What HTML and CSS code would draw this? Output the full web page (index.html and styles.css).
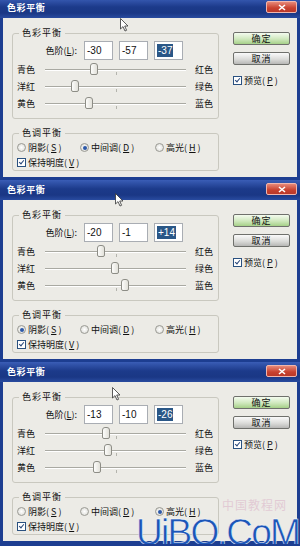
FILE: index.html
```html
<!DOCTYPE html>
<html lang="zh-CN">
<head>
    <meta charset="UTF-8">
    <meta name="viewport" content="width=device-width, initial-scale=1.0">
    <title>色彩平衡</title>
    <link rel="stylesheet" href="styles.css">
</head>
<body>
<div class="stack">

    <!-- dialog 1: midtones -->
    <div class="dlg">
        <div class="titlebar">
            <span class="title">色彩平衡</span>
            <span class="close"><svg width="8" height="7" viewBox="0 0 8 7"><path d="M1 1 L7 6 M7 1 L1 6" stroke="#fff" stroke-width="1.6"/></svg></span>
        </div>
        <div class="body">
            <div class="main">
                <fieldset class="grp grp-color">
                    <legend>色彩平衡</legend>
                    <div class="levels">
                        <span class="lbl">色阶(<u>L</u>):</span>
                        <span class="field">-30</span>
                        <span class="field">-57</span>
                        <span class="field"><span class="hl">-37</span></span>
                    </div>
                    <div class="row"><span>青色</span><div class="track"><span class="thumb" style="left: 35%"></span></div><span class="rlbl">红色</span></div>
                    <div class="row"><span>洋红</span><div class="track"><span class="thumb" style="left: 21.5%"></span></div><span class="rlbl">绿色</span></div>
                    <div class="row"><span>黄色</span><div class="track"><span class="thumb" style="left: 31.5%"></span></div><span class="rlbl">蓝色</span></div>
                </fieldset>
                <fieldset class="grp grp-tone">
                    <legend>色调平衡</legend>
                    <div class="radios">
                        <span class="opt"><i class="radio"></i>阴影(<u>S</u>)</span>
                        <span class="opt"><i class="radio on"></i>中间调(<u>D</u>)</span>
                        <span class="opt"><i class="radio"></i>高光(<u>H</u>)</span>
                    </div>
                    <div class="opt"><i class="check"></i>保持明度(<u>V</u>)</div>
                </fieldset>
            </div>
            <div class="side">
                <div class="btn ok">确定</div>
                <div class="btn cancel">取消</div>
                <div class="opt preview"><i class="check"></i>预览(<u>P</u>)</div>
            </div>
        </div>
        <svg class="cursor c1" width="9" height="14" viewBox="0 0 9 14"><path d="M0.5 0.5 V11 L3 8.6 L5 13 L6.6 12.3 L4.7 8 H8 Z" fill="#fff" stroke="#333" stroke-width="0.8"/></svg>
    </div>

    <!-- dialog 2: shadows -->
    <div class="dlg">
        <div class="titlebar">
            <span class="title">色彩平衡</span>
            <span class="close"><svg width="8" height="7" viewBox="0 0 8 7"><path d="M1 1 L7 6 M7 1 L1 6" stroke="#fff" stroke-width="1.6"/></svg></span>
        </div>
        <div class="body">
            <div class="main">
                <fieldset class="grp grp-color">
                    <legend>色彩平衡</legend>
                    <div class="levels">
                        <span class="lbl">色阶(<u>L</u>):</span>
                        <span class="field">-20</span>
                        <span class="field">-1</span>
                        <span class="field"><span class="hl">+14</span></span>
                    </div>
                    <div class="row"><span>青色</span><div class="track"><span class="thumb" style="left: 40%"></span></div><span class="rlbl">红色</span></div>
                    <div class="row"><span>洋红</span><div class="track"><span class="thumb" style="left: 49.5%"></span></div><span class="rlbl">绿色</span></div>
                    <div class="row"><span>黄色</span><div class="track"><span class="thumb" style="left: 57%"></span></div><span class="rlbl">蓝色</span></div>
                </fieldset>
                <fieldset class="grp grp-tone">
                    <legend>色调平衡</legend>
                    <div class="radios">
                        <span class="opt"><i class="radio on"></i>阴影(<u>S</u>)</span>
                        <span class="opt"><i class="radio"></i>中间调(<u>D</u>)</span>
                        <span class="opt"><i class="radio"></i>高光(<u>H</u>)</span>
                    </div>
                    <div class="opt"><i class="check"></i>保持明度(<u>V</u>)</div>
                </fieldset>
            </div>
            <div class="side">
                <div class="btn ok">确定</div>
                <div class="btn cancel">取消</div>
                <div class="opt preview"><i class="check"></i>预览(<u>P</u>)</div>
            </div>
        </div>
        <svg class="cursor c2" width="9" height="14" viewBox="0 0 9 14"><path d="M0.5 0.5 V11 L3 8.6 L5 13 L6.6 12.3 L4.7 8 H8 Z" fill="#fff" stroke="#333" stroke-width="0.8"/></svg>
    </div>

    <!-- dialog 3: highlights -->
    <div class="dlg">
        <div class="titlebar">
            <span class="title">色彩平衡</span>
            <span class="close"><svg width="8" height="7" viewBox="0 0 8 7"><path d="M1 1 L7 6 M7 1 L1 6" stroke="#fff" stroke-width="1.6"/></svg></span>
        </div>
        <div class="body">
            <div class="main">
                <fieldset class="grp grp-color">
                    <legend>色彩平衡</legend>
                    <div class="levels">
                        <span class="lbl">色阶(<u>L</u>):</span>
                        <span class="field">-13</span>
                        <span class="field">-10</span>
                        <span class="field"><span class="hl">-26</span></span>
                    </div>
                    <div class="row"><span>青色</span><div class="track"><span class="thumb" style="left: 43.5%"></span></div><span class="rlbl">红色</span></div>
                    <div class="row"><span>洋红</span><div class="track"><span class="thumb" style="left: 45%"></span></div><span class="rlbl">绿色</span></div>
                    <div class="row"><span>黄色</span><div class="track"><span class="thumb" style="left: 37%"></span></div><span class="rlbl">蓝色</span></div>
                </fieldset>
                <fieldset class="grp grp-tone">
                    <legend>色调平衡</legend>
                    <div class="radios">
                        <span class="opt"><i class="radio"></i>阴影(<u>S</u>)</span>
                        <span class="opt"><i class="radio"></i>中间调(<u>D</u>)</span>
                        <span class="opt"><i class="radio on"></i>高光(<u>H</u>)</span>
                    </div>
                    <div class="opt"><i class="check"></i>保持明度(<u>V</u>)</div>
                </fieldset>
            </div>
            <div class="side">
                <div class="btn ok">确定</div>
                <div class="btn cancel">取消</div>
                <div class="opt preview"><i class="check"></i>预览(<u>P</u>)</div>
            </div>
        </div>
        <svg class="cursor c3" width="9" height="14" viewBox="0 0 9 14"><path d="M0.5 0.5 V11 L3 8.6 L5 13 L6.6 12.3 L4.7 8 H8 Z" fill="#fff" stroke="#333" stroke-width="0.8"/></svg>
    </div>

    <!-- site watermark -->
    <div class="mark-cn">中国教程网</div>
    <div class="mark">UiBQ.CoM</div>
</div>
</body>
</html>
```

FILE: styles.css
```css
body {
    margin: 0;
    background-color: #1d3e91;
    font-family: "Noto Sans CJK SC", "Noto Sans", sans-serif;
    font-size: 9px;
    color: #111;
    overflow: hidden;
}

u {
    text-decoration: underline;
}

.stack {
    position: relative;
    margin-top: -2px;
}

.dlg {
    position: relative;
    height: 182px;
    display: flex;
    flex-direction: column;
}

.titlebar {
    height: 20px;
    flex: none;
    box-sizing: border-box;
    padding: 0 3px 0 7px;
    display: flex;
    justify-content: space-between;
    background: linear-gradient(#3a5db6, #1c3a8a 45%, #1a3785 75%, #294b9f);
}

.title {
    color: white;
    font-weight: bold;
    font-size: 9px;
    line-height: 20px;
    letter-spacing: 0.6px;
}

.close {
    margin-top: 3px;
    width: 31px;
    height: 12px;
    box-sizing: border-box;
    border: 1px solid #f1b6ad;
    border-radius: 2px;
    background: linear-gradient(#e68878, #c8412f 60%, #b9382a);
    display: flex;
    justify-content: center;
    align-items: center;
}

.body {
    flex: 1;
    display: flex;
    background-color: #ecebe6;
    border: 3px solid #1d3e91;
    border-top: none;
}

.main {
    padding: 9px 0 0 9px;
    width: 207px;
}

.grp {
    margin: 0;
    border: 1px solid #c9c8bf;
    border-radius: 3px;
    box-sizing: border-box;
    width: 207px;
}

.grp legend {
    padding: 0 3px;
    margin-left: 2px;
    line-height: 12px;
    letter-spacing: 1px;
}

.grp-color {
    height: 92px;
    padding: 1px 5px 0 4px;
}

.grp-tone {
    height: 44px;
    margin-top: 8px;
    padding: 1px 5px 0 4px;
}

.levels {
    display: flex;
    align-items: center;
    height: 20px;
    gap: 6px;
    margin-bottom: 1px;
}

.levels .lbl {
    width: 60px;
    text-align: right;
    margin-right: 1px;
}

.field {
    width: 29px;
    height: 19px;
    box-sizing: border-box;
    border: 1px solid #a9adb3;
    background-color: white;
    font-family: "Liberation Sans", Arial, sans-serif;
    font-size: 10px;
    line-height: 17px;
    padding-left: 2px;
}

.hl {
    background-color: #2a5787;
    color: white;
    padding: 1px 1px;
}

.row {
    display: grid;
    grid-template-columns: 28px 141px 1fr;
    align-items: center;
    height: 17px;
}

.rlbl {
    padding-left: 9px;
}

.track {
    position: relative;
    height: 13px;
}

.track::before {
    content: "";
    position: absolute;
    left: 0;
    right: 0;
    top: 6px;
    height: 1px;
    background-color: #a9a9a2;
    border-bottom: 1px solid #fff;
}

.track::after {
    content: "";
    position: absolute;
    left: 50%;
    top: 9px;
    width: 1px;
    height: 3px;
    background-color: #b4b4ad;
}

.thumb {
    position: absolute;
    top: 0;
    width: 8px;
    height: 12px;
    transform: translateX(-50%);
    box-sizing: border-box;
    border: 1px solid #8d8d86;
    border-radius: 3px 3px 2px 2px;
    background: linear-gradient(90deg, #fdfdfb, #e2e1da);
    z-index: 1;
}

.radios {
    display: grid;
    grid-template-columns: 63px 75px auto;
    height: 15px;
    align-items: center;
}

.opt {
    display: flex;
    align-items: center;
    gap: 2px;
    height: 15px;
}

.radio {
    width: 9px;
    height: 9px;
    box-sizing: border-box;
    border: 1px solid #9a9a94;
    border-radius: 50%;
    background: radial-gradient(#ffffff, #d8d8d2);
    display: flex;
    justify-content: center;
    align-items: center;
}

.radio.on::after {
    content: "";
    width: 4px;
    height: 4px;
    border-radius: 50%;
    background-color: #2c58a8;
}

.check {
    width: 9px;
    height: 9px;
    box-sizing: border-box;
    border: 1px solid #2a5180;
    background-color: white;
    position: relative;
}

.check::after {
    content: "";
    position: absolute;
    left: 2px;
    top: 0;
    width: 2px;
    height: 4px;
    border: solid #27467a;
    border-width: 0 1.5px 1.5px 0;
    transform: rotate(40deg);
}

.side {
    padding: 14px 0 0 14px;
}

.btn {
    width: 57px;
    height: 13px;
    box-sizing: border-box;
    border: 1px solid #6f706c;
    border-radius: 2px;
    text-align: center;
    line-height: 11px;
    letter-spacing: 1px;
}

.ok {
    background: linear-gradient(#f4fbef, #cfe8bd 55%, #a6d089);
}

.cancel {
    margin-top: 7px;
    background: linear-gradient(#fafafa, #dcdcda 55%, #b7b7b5);
}

.preview {
    margin-top: 8px;
}

.cursor {
    position: absolute;
}

.c1 { left: 120px; top: 20px; }
.c2 { left: 115px; top: 13px; }
.c3 { left: 112px; top: 25px; }

.mark-cn {
    position: absolute;
    left: 222px;
    top: 500px;
    font-size: 12px;
    line-height: 14px;
    letter-spacing: 1px;
    color: rgba(215, 170, 195, 0.5);
}

.mark {
    position: absolute;
    left: 136px;
    top: 522px;
    font-family: "Liberation Sans", Arial, sans-serif;
    font-size: 37px;
    line-height: 26px;
    color: #1c56b8;
    -webkit-text-stroke: 0.5px #fff;
    letter-spacing: -1.7px;
}
```
